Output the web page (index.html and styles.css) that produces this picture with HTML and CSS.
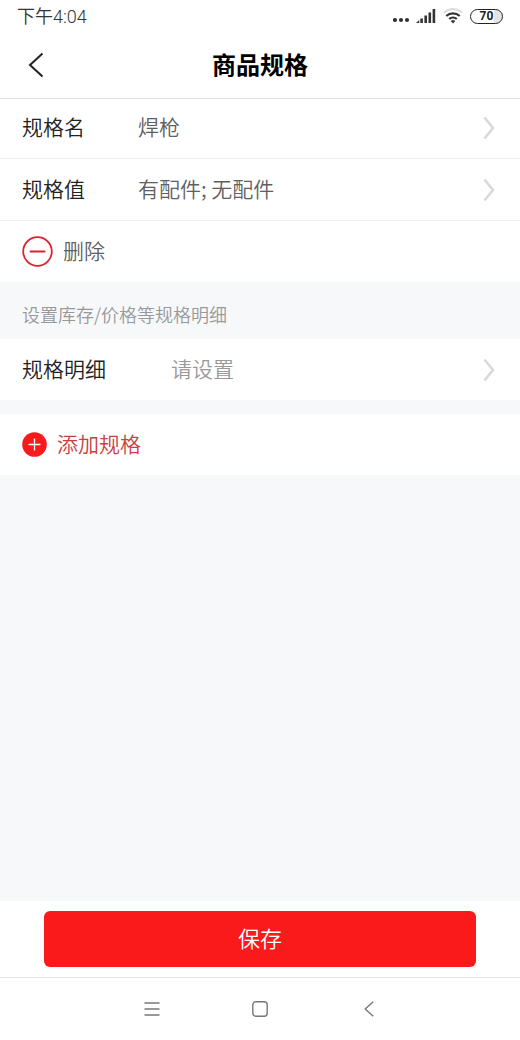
FILE: index.html
```html
<!DOCTYPE html>
<html lang="zh-CN">
<head>
<meta charset="utf-8">
<meta name="viewport" content="width=device-width, initial-scale=1">
<title>商品规格</title>
<link rel="stylesheet" href="styles.css">
</head>
<body>
<div class="screen">
  <div class="status">
    <span class="status-time">下午4:04</span>
    <span class="status-icons">
      <svg class="icon-dots" width="18" height="16" viewBox="0 0 18 16" fill="#333"><circle cx="2" cy="12" r="2.1"/><circle cx="8" cy="12" r="2.1"/><circle cx="14" cy="12" r="2.1"/></svg>
      <svg class="icon-signal" width="20" height="16" viewBox="0 0 20 16" fill="#333"><path d="M0 15l3.200-3v3zM4.300 10.500h2.600V15H4.300zM8.400 7.500H11V15H8.400zM12.500 4.500h2.600V15h-2.600zM16.600 1h2.600v14h-2.600z"/></svg>
      <svg class="icon-wifi" width="20" height="16" viewBox="0 0 20 16" fill="none" stroke-width="2.200"><path d="M.8 4.800a13.500 13.500 0 0 1 18.400 0" stroke="#ddd"/><path d="M3.300 8a9.800 9.800 0 0 1 13.400 0M6.200 11a5.600 5.600 0 0 1 7.600 0" stroke="#333"/><path d="M8 13a3.200 3.200 0 0 1 4 0L10 15.200z" fill="#333" stroke="#333" stroke-width=".5"/></svg>
      <span class="battery">70</span>
    </span>
  </div>

  <header class="header">
    <button class="back" type="button" aria-label="返回">
      <svg width="16" height="26" viewBox="0 0 16 26" fill="none" stroke="#222" stroke-width="2"><path d="M14.500 1.500L2 13l12.500 11.500"/></svg>
    </button>
    <h1 class="title">商品规格</h1>
  </header>

  <main class="content">
    <section class="group">
      <button class="row row-first" type="button">
        <span class="label">规格名</span><span class="value">焊枪</span>
        <svg class="chevron" width="12" height="24" viewBox="0 0 12 24"><path d="M1.500 1.500L10 12 1.500 22.500"/></svg>
      </button>
      <button class="row" type="button">
        <span class="label">规格值</span><span class="value">有配件; 无配件</span>
        <svg class="chevron" width="12" height="24" viewBox="0 0 12 24"><path d="M1.500 1.500L10 12 1.500 22.500"/></svg>
      </button>
      <button class="row row-delete" type="button">
        <svg width="31" height="31" viewBox="0 0 31 31" fill="none" stroke="#e0202c"><circle cx="15.500" cy="15.500" r="14.300" stroke-width="1.800"/><path d="M8.500 15.500h14" stroke-width="2" stroke-linecap="round"/></svg>
        <span>删除</span>
      </button>
    </section>

    <p class="hint">设置库存/价格等规格明细</p>

    <section class="group">
      <button class="row" type="button">
        <span class="label label-wide">规格明细</span><span class="value value-empty">请设置</span>
        <svg class="chevron" width="12" height="24" viewBox="0 0 12 24"><path d="M1.500 1.500L10 12 1.500 22.500"/></svg>
      </button>
    </section>

    <section class="group group-add">
      <button class="row row-add" type="button">
        <svg width="25" height="25" viewBox="0 0 25 25"><circle cx="12.500" cy="12.500" r="12.300" fill="#fb1a1b"/><path d="M6.500 12.500h12M12.500 6.500v12" stroke="#fff" stroke-width="1.300"/></svg>
        <span>添加规格</span>
      </button>
    </section>
  </main>

  <footer class="footer">
    <button class="save" type="button">保存</button>
  </footer>

  <nav class="system-nav">
    <button type="button" aria-label="菜单"><svg width="16" height="16" viewBox="0 0 16 16" fill="none" stroke="#777" stroke-width="1.300"><path d="M.5 2h15M.5 8h15M.5 14h15"/></svg></button>
    <button type="button" aria-label="主页"><svg width="16" height="16" viewBox="0 0 16 16" fill="none" stroke="#777" stroke-width="1.400"><rect x=".8" y=".8" width="14.400" height="14.400" rx="3"/></svg></button>
    <button type="button" aria-label="后退"><svg width="16" height="16" viewBox="0 0 16 16" fill="none" stroke="#777" stroke-width="1.400"><path d="M13.200.8L5.200 8l8 7.200"/></svg></button>
  </nav>
</div>
</body>
</html>
```
FILE: styles.css
```css
* {
  box-sizing: border-box;
}

body {
  margin: 0;
  background: #fff;
  color: #222;
  font-family: "Noto Sans CJK SC", sans-serif;
  font-weight: 350;
}

button {
  margin: 0;
  padding: 0;
  border: 0;
  background: none;
  color: inherit;
  font: inherit;
  cursor: pointer;
}

svg {
  display: block;
  flex: none;
}

.screen {
  display: flex;
  flex-direction: column;
  min-height: 100vh;
}

.status {
  display: flex;
  align-items: center;
  justify-content: space-between;
  height: 32px;
  padding: 0 17px;
}

.status-time {
  padding-top: 2px;
  color: #333;
  font-family: Roboto, "Noto Sans CJK SC", sans-serif;
  font-size: 18px;
  line-height: 24px;
}

.status-icons {
  display: flex;
  align-items: center;
  gap: 7px;
}

.icon-dots {
  margin-right: -2px;
}

.battery {
  width: 33px;
  border: 1px solid #222;
  border-radius: 8px;
  background: linear-gradient(90deg, #fff 75%, #e4e4e4 75%) padding-box;
  color: #222;
  font: 700 12px/13px Roboto, sans-serif;
  text-align: center;
}

.header {
  display: grid;
  grid-template-columns: 72px 1fr 72px;
  align-items: center;
  height: 67px;
  border-bottom: 1px solid #e2e2e4;
}

.back {
  display: flex;
  justify-content: center;
  padding: 8px 0;
}

.title {
  margin: 0;
  padding-bottom: 2px;
  color: #000;
  font-size: 24px;
  font-weight: 700;
  line-height: 36px;
  text-align: center;
}

.content {
  flex: 1;
  background: #f7f8fa;
}

.group {
  background: #fff;
}

.group-add {
  margin-top: 14px;
}

.row {
  display: flex;
  align-items: center;
  width: 100%;
  height: 61px;
  padding: 0 25px 0 22px;
  font-size: 21px;
  line-height: 32px;
  text-align: left;
}

.row span {
  padding-bottom: 4px;
}

.row + .row {
  height: 62px;
  border-top: 1px solid #f1f1f3;
}

.row-first {
  height: 59px;
  padding-bottom: 2px;
}

.label {
  width: 116px;
}

.label-wide {
  width: 149px;
}

.value {
  flex: 1;
  color: #606060;
}

.value-empty {
  color: #999;
}

.chevron {
  fill: none;
  stroke: #d8d8d8;
  stroke-width: 2.5;
}

.row-delete {
  gap: 10px;
  color: #606060;
}

.row-add {
  gap: 10px;
  color: #c9403f;
}

.hint {
  margin: 0;
  padding: 19px 22px 11px;
  color: #999;
  font-size: 18px;
  line-height: 27px;
}

.footer {
  padding: 10px 44px;
  background: #fff;
}

.save {
  display: block;
  width: 100%;
  height: 56px;
  padding-bottom: 4px;
  border-radius: 6px;
  background: #fb1a1b;
  color: #fff;
  font-size: 22px;
  line-height: 32px;
}

.system-nav {
  display: flex;
  justify-content: center;
  gap: 60px;
  height: 63px;
  border-top: 1px solid #e8e8ea;
}

.system-nav button {
  display: flex;
  align-items: center;
  justify-content: center;
  width: 48px;
}
```
